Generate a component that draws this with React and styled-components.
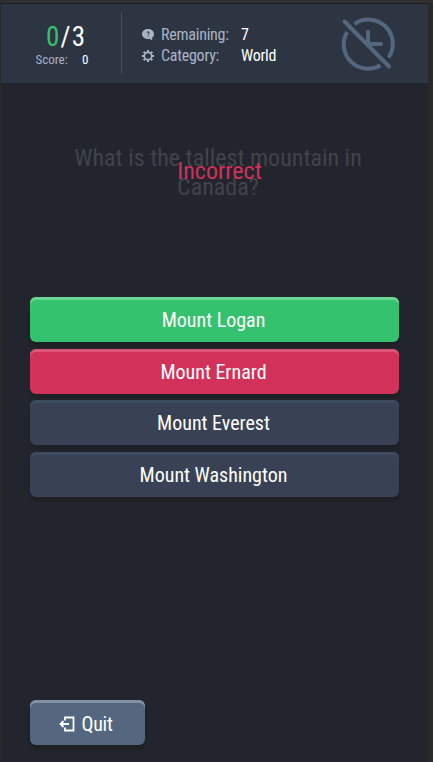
import React from 'react';
import styled, { createGlobalStyle } from 'styled-components';

const Global = createGlobalStyle`
  * { box-sizing: border-box; }
  body { margin: 0; background: #2b2b2b; overflow: hidden; }
  button { font: inherit; }
`;

const Frame = styled.div`
  height: 762px;
  padding: 3px 5px 0 1px;
  background: linear-gradient(#303030 0 3px, #292929 3px);
  font-family: 'Roboto Condensed', Roboto, sans-serif;
  font-stretch: 75%;
  color: #fff;
`;

const Screen = styled.main`
  height: 759px;
  border-top: 1px solid #1c1d20;
  background: #22252d;
  display: flex;
  flex-direction: column;
`;

const Header = styled.header`
  height: 79px;
  flex: none;
  background: #2e3542;
  display: flex;
`;

const Score = styled.section`
  width: 121px;
  margin: 8px 0 9px;
  border-right: 1px solid #47525f;
  padding-top: 9px;
`;

const Tally = styled.div`
  padding-left: 45px;
  font-size: 27px;
  line-height: 33px;
  letter-spacing: 1.2px;
`;

const Correct = styled.span`
  color: #35c26e;
`;

const ScoreLine = styled.div`
  display: flex;
  padding-left: 34.5px;
  font-size: 13px;
  line-height: 12px;
`;

const Label = styled.span`
  width: ${(p) => p.$width}px;
  color: #a8b4c5;
`;

const Details = styled.section`
  width: 212px;
  padding: 20px 0 0 20px;
`;

const Detail = styled.div`
  display: flex;
  align-items: center;
  height: 21px;
  font-size: 16px;
  letter-spacing: -0.25px;

  svg { width: 12px; height: 12px; margin-right: 7px; flex: none; }
`;

const TimerOff = styled.svg`
  width: 54px;
  height: 54px;
  margin: 13px 0 0 7px;
  overflow: visible;
`;

const Prompt = styled.section`
  position: relative;
  height: 214px;
  padding: 61px 60px 0 67px;
  text-align: center;
  font-size: 24px;
  line-height: 29px;
`;

const Question = styled.p`
  margin: 0 -10px;
  color: #414349;
`;

const Verdict = styled.strong`
  position: absolute;
  top: 74px;
  left: 10px;
  right: 0;
  font-weight: 400;
  color: #d2325a;
`;

const Answers = styled.div`
  display: grid;
  grid-auto-rows: 45px;
  gap: 6.7px;
  padding: 0 29px;
`;

const tones = {
  correct: ['#35c26e', '#6ad693'],
  wrong: ['#d2325a', '#db5578'],
  idle: ['#384254', '#3d4b5e'],
  quit: ['#54677f', '#8293a8'],
};

const Button = styled.button`
  display: flex;
  align-items: center;
  justify-content: center;
  width: 100%;
  height: 45px;
  padding: 1px 2px 0 0;
  border: 0;
  border-radius: 6px;
  color: #fff;
  font-size: 20px;
  background: ${(p) => tones[p.$tone][0]};
  box-shadow: inset 0 3px 0 ${(p) => tones[p.$tone][1]}, 0 4px 3px #1e2025;
`;

const QuitButton = styled(Button)`
  width: 115px;
  margin: auto 0 17px 29px;
  padding: 3px 4px 0 0;
  gap: 7px;
  letter-spacing: -0.3px;

  svg { width: 16px; height: 16px; }
`;

const BubbleIcon = () => (
  <svg viewBox="0 0 12 12">
    <path d="M6 .1C2.700.1 0 2.200 0 5s2.700 5 6 5c.5 0 1-.1 1.500-.2.8.9 1.900 1.400 3.300 1.400-.6-.6-.9-1.400-.9-2.200C11.300 8.100 12 6.700 12 5 12 2.200 9.300.1 6 .1Z" fill="#a8b4c5" />
    <path d="M4.800 3.900C4.800 2.500 7.300 2.600 7.200 4 7.200 5 6.100 4.900 6.100 6M6.100 7v.9" fill="none" stroke="#2e3542" />
  </svg>
);

const GearIcon = () => (
  <svg viewBox="0 0 12 12" fill="none" stroke="#a8b4c5">
    <circle cx="6" cy="6" r="3.700" strokeWidth="1.700" />
    <path d="M6 0v2M6 10v2M0 6h2M10 6h2M1.700 1.700l1.400 1.400M8.900 8.900l1.400 1.400M1.700 10.300l1.400-1.400M8.900 3.100l1.400-1.400" strokeWidth="2" />
  </svg>
);

const ExitIcon = () => (
  <svg viewBox="0 0 16 16" fill="none" stroke="#fff" strokeWidth="1.800">
    <path d="M6 4.500V1.500h8.500v13H6v-3M10 8H1.500M4.500 5l-3 3 3 3" />
  </svg>
);

const answers = [
  ['Mount Logan', 'correct'],
  ['Mount Ernard', 'wrong'],
  ['Mount Everest', 'idle'],
  ['Mount Washington', 'idle'],
];

export default function App() {
  return (
    <Frame>
      <Global />
      <Screen>
        <Header>
          <Score>
            <Tally><Correct>0</Correct>/3</Tally>
            <ScoreLine><Label $width={46.5}>Score:</Label>0</ScoreLine>
          </Score>
          <Details>
            <Detail><BubbleIcon /><Label $width={80}>Remaining:</Label>7</Detail>
            <Detail><GearIcon /><Label $width={80}>Category:</Label>World</Detail>
          </Details>
          <TimerOff viewBox="341 17 54 54" fill="none" stroke="#54677f" strokeWidth="4" strokeLinecap="round">
            <path d="M354.500 24A24.300 24.300 0 0 1 388.600 57.500M380.500 65.300A24.300 24.300 0 0 1 347.100 32.100" strokeLinecap="butt" />
            <path d="M344.500 21.500L389 66.500M368 32v12h13" />
          </TimerOff>
        </Header>
        <Prompt>
          <Question>What is the tallest mountain in<br />Canada?</Question>
          <Verdict>Incorrect</Verdict>
        </Prompt>
        <Answers>
          {answers.map(([text, tone]) => <Button key={text} $tone={tone}>{text}</Button>)}
        </Answers>
        <QuitButton $tone="quit"><ExitIcon />Quit</QuitButton>
      </Screen>
    </Frame>
  );
}
